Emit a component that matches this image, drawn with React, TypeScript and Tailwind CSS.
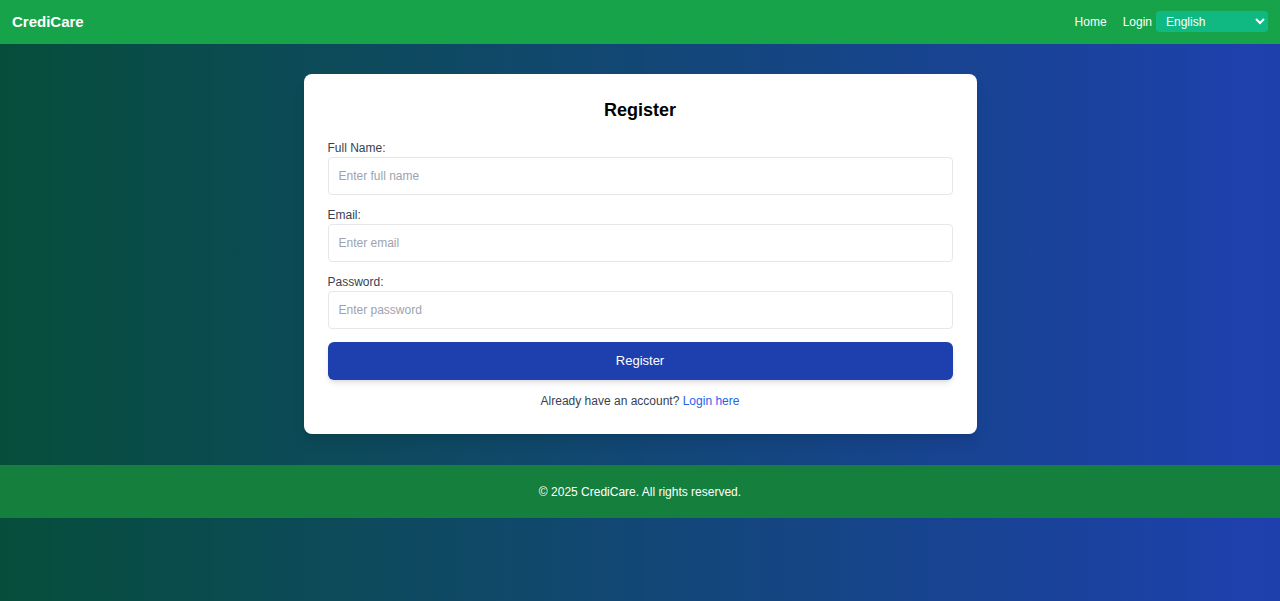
import { useState } from "react";

function Field({
  label,
  type,
  placeholder,
}: {
  label: string;
  type: string;
  placeholder: string;
}) {
  return (
    <div className="mb-3">
      <label className="block text-[12px] leading-[17px] text-[#374151]">{label}</label>
      <input
        type={type}
        placeholder={placeholder}
        className="block h-[38px] w-full rounded border border-[#e5e7eb] bg-white px-[10px] text-[12px] text-[#111827] placeholder:text-[#9ca3af] focus:outline-none"
      />
    </div>
  );
}

export default function App() {
  const [lang, setLang] = useState("en");

  return (
    <div className="flex min-h-screen flex-col bg-[linear-gradient(to_right,#064e3b,#1e40af)] font-['Liberation_Sans',Arial,sans-serif]">
      <header className="flex h-[44px] items-center justify-between bg-[#16a34a] px-3">
        <span className="text-[15px] font-bold text-white">CrediCare</span>
        <nav className="flex items-center gap-4 text-[12px] text-white">
          <a href="#">Home</a>
          <div className="flex items-center gap-[4px]">
            <a href="#">Login</a>
            <select
              value={lang}
              onChange={(e) => setLang(e.target.value)}
              className="mt-[-1px] h-[21px] w-[112px] rounded bg-[#10b981] pl-[6px] text-[12px] text-white outline-none"
            >
              <option value="en">English</option>
              <option value="hi">हिन्दी</option>
            </select>
          </div>
        </nav>
      </header>

      <main className="flex justify-center pt-[30px] pb-[31px]">
        <div className="w-full max-w-[673px] rounded-lg bg-white p-6 shadow-lg">
          <h2 className="mb-[18px] text-center text-[18px] leading-6 font-bold text-black">Register</h2>
          <form onSubmit={(e) => e.preventDefault()}>
            <Field label="Full Name:" type="text" placeholder="Enter full name" />
            <Field label="Email:" type="email" placeholder="Enter email" />
            <Field label="Password:" type="password" placeholder="Enter password" />
            <button
              type="submit"
              className="mt-[1px] h-[38px] w-full rounded-md bg-[#1e40af] text-[13px] text-white shadow-md"
            >
              Register
            </button>
          </form>
          <p className="mt-3 text-center text-[12px] leading-[18px] text-[#374151]">
            Already have an account?{" "}
            <a href="#" className="text-[#2563eb]">
              Login here
            </a>
          </p>
        </div>
      </main>

      <footer className="flex h-[53px] items-center justify-center bg-[#15803d] text-[12px] text-white">
        © 2025 CrediCare. All rights reserved.
      </footer>
    </div>
  );
}
